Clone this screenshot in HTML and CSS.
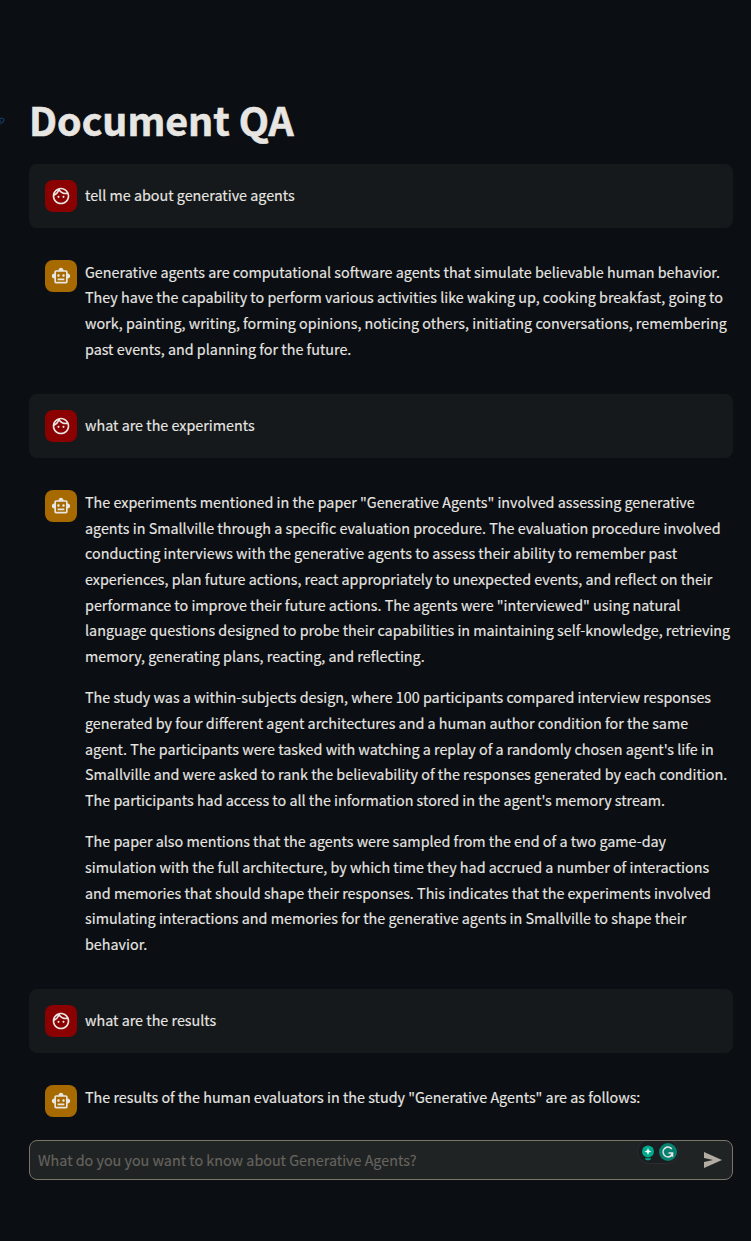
FILE: index.html
```html
<!DOCTYPE html>
<html lang="en">
<head>
<meta charset="utf-8">
<title>Document QA</title>
<link rel="stylesheet" href="styles.css">
</head>
<body>
<svg class="defs" width="0" height="0" aria-hidden="true">
  <symbol id="face" viewBox="0 0 24 24"><path d="M10.25 13a1.25 1.25 0 1 1-2.5 0 1.25 1.25 0 0 1 2.5 0zM15 11.75a1.25 1.25 0 1 0 0 2.5 1.25 1.25 0 0 0 0-2.5zm7 .25c0 5.52-4.48 10-10 10S2 17.52 2 12 6.48 2 12 2s10 4.48 10 10zM10.66 4.12C12.06 6.44 14.6 8 17.5 8c.46 0 .91-.05 1.34-.12C17.44 5.56 14.9 4 12 4c-.46 0-.91.05-1.34.12zM4.42 9.47a8.046 8.046 0 0 0 3.66-4.44 8.046 8.046 0 0 0-3.66 4.44zM20 12c0-.78-.12-1.53-.33-2.24-.7.15-1.42.24-2.17.24a10 10 0 0 1-7.76-3.69A10.016 10.016 0 0 1 4 11.86c.01.04 0 .09 0 .14 0 4.41 3.59 8 8 8s8-3.59 8-8z"/></symbol>
  <symbol id="robot" viewBox="0 0 24 24"><path d="M20 9V7c0-1.1-.9-2-2-2h-3c0-1.66-1.34-3-3-3S9 3.34 9 5H6c-1.1 0-2 .9-2 2v2c-1.66 0-3 1.34-3 3s1.34 3 3 3v4c0 1.1.9 2 2 2h12c1.1 0 2-.9 2-2v-4c1.66 0 3-1.34 3-3s-1.34-3-3-3zm-2 10H6V7h12v12zm-9-6c-.83 0-1.5-.67-1.5-1.5S8.170 10 9 10s1.500.670 1.500 1.500S9.830 13 9 13zm7.500-1.500c0 .83-.67 1.500-1.500 1.500s-1.500-.67-1.500-1.500.67-1.500 1.500-1.500 1.500.670 1.500 1.500zM8 15h8v2H8v-2z"/></symbol>
</svg>
<main class="page">
  <h1 class="title">
    <svg class="anchor" viewBox="0 0 24 24"><path d="M10 13a5 5 0 0 0 7.500.5l3-3a5 5 0 0 0-7-7L11.800 5.200M14 11a5 5 0 0 0-7.500-.5l-3 3a5 5 0 0 0 7 7l1.700-1.700"/></svg>
    <span>Document QA</span>
  </h1>
  <section class="chat">
    <article class="message user">
      <div class="avatar"><svg class="icon"><use href="#face"/></svg></div>
      <div class="content"><p>tell me about generative agents</p></div>
    </article>
    <article class="message">
      <div class="avatar"><svg class="icon"><use href="#robot"/></svg></div>
      <div class="content">
        <p>Generative agents are computational software agents that simulate believable human behavior.<br>
        They have the capability to perform various activities like waking up, cooking breakfast, going to<br>
        work, painting, writing, forming opinions, noticing others, initiating conversations, remembering<br>
        past events, and planning for the future.</p>
      </div>
    </article>
    <article class="message user">
      <div class="avatar"><svg class="icon"><use href="#face"/></svg></div>
      <div class="content"><p>what are the experiments</p></div>
    </article>
    <article class="message">
      <div class="avatar"><svg class="icon"><use href="#robot"/></svg></div>
      <div class="content">
        <p>The experiments mentioned in the paper "Generative Agents" involved assessing generative<br>
        agents in Smallville through a specific evaluation procedure. The evaluation procedure involved<br>
        conducting interviews with the generative agents to assess their ability to remember past<br>
        experiences, plan future actions, react appropriately to unexpected events, and reflect on their<br>
        performance to improve their future actions. The agents were "interviewed" using natural<br>
        language questions designed to probe their capabilities in maintaining self-knowledge, retrieving<br>
        memory, generating plans, reacting, and reflecting.</p>
        <p>The study was a within-subjects design, where 100 participants compared interview responses<br>
        generated by four different agent architectures and a human author condition for the same<br>
        agent. The participants were tasked with watching a replay of a randomly chosen agent's life in<br>
        Smallville and were asked to rank the believability of the responses generated by each condition.<br>
        The participants had access to all the information stored in the agent's memory stream.</p>
        <p>The paper also mentions that the agents were sampled from the end of a two game-day<br>
        simulation with the full architecture, by which time they had accrued a number of interactions<br>
        and memories that should shape their responses. This indicates that the experiments involved<br>
        simulating interactions and memories for the generative agents in Smallville to shape their<br>
        behavior.</p>
      </div>
    </article>
    <article class="message user">
      <div class="avatar"><svg class="icon"><use href="#face"/></svg></div>
      <div class="content"><p>what are the results</p></div>
    </article>
    <article class="message">
      <div class="avatar"><svg class="icon"><use href="#robot"/></svg></div>
      <div class="content"><p>The results of the human evaluators in the study "Generative Agents" are as follows:</p></div>
    </article>
  </section>
  <div class="composer">
    <span class="placeholder">What do you you want to know about Generative Agents?</span>
    <svg class="assist" viewBox="0 0 42 23">
      <rect class="assist-pill" x=".5" y="-1.500" width="41" height="24" rx="12"/>
      <circle class="bulb" cx="11" cy="10.500" r="6"/>
      <path class="bulb" d="M8 17.300h6v1q-3 2.200-6 0z"/>
      <path class="spark" d="M11 7l1 2.500 2.500 1-2.500 1-1 2.500-1-2.500-2.500-1 2.500-1z"/>
      <circle class="disc" cx="31" cy="11" r="9"/>
      <path class="swirl" d="M34.800 7.900a4.900 4.900 0 1 0-1 7.100l1.500-2.500M31.500 12h4v3.800"/>
    </svg>
    <svg class="send" viewBox="0 0 18 16"><path d="M0 0l18 8L0 16v-6l9-2-9-2z"/></svg>
  </div>
</main>
</body>
</html>
```
FILE: styles.css
```css
* { box-sizing: border-box; }

body {
  margin: 0;
  height: 1241px;
  overflow: hidden;
  background: #0b0e12;
  color: #e8e6e3;
  font-family: "Noto Sans CJK JP", "Noto Sans", sans-serif;
  font-size: 14.33px;
  line-height: 25.6px;
  -webkit-text-stroke: 0.15px;
}

.defs { position: absolute; }

.page {
  display: flex;
  flex-direction: column;
  height: 1241px;
  padding: 93px 18px 61px 29px;
}

.title {
  position: relative;
  flex: none;
  height: 52px;
  margin: 0 0 19px;
  font-size: 39.3px;
  font-weight: 700;
  line-height: 52px;
  white-space: nowrap;
  -webkit-text-stroke: 0.6px;
}

.anchor {
  position: absolute;
  left: -34px;
  top: 24px;
  width: 10px;
  height: 10px;
  fill: none;
  stroke: #173f68;
  stroke-width: 2.5;
}

.chat {
  display: flex;
  flex: 1;
  flex-direction: column;
  gap: 16px;
  min-height: 0;
}

.message {
  display: flex;
  flex: none;
  gap: 8px;
  padding: 16px;
  border-radius: 8px;
}

.user {
  align-items: center;
  background: #15191b;
}

.avatar {
  display: flex;
  flex: none;
  align-items: center;
  justify-content: center;
  width: 32px;
  height: 32px;
  border-radius: 8px;
  background: #a66a00;
}

.user .avatar { background: #8b0000; }

.icon {
  width: 20px;
  height: 20px;
  fill: #e8e6e3;
}

.content {
  display: flex;
  flex: 1;
  flex-direction: column;
  gap: 16px;
  min-width: 0;
  margin: -1.2px 0 1.2px;
  white-space: nowrap;
}

.content p { margin: 0; }

.composer {
  display: flex;
  flex: none;
  align-items: center;
  height: 40px;
  padding: 0 10px 0 8px;
  border: 1px solid #7b7469;
  border-radius: 8px;
  background: #202324;
}

.placeholder {
  flex: 1;
  color: #66645f;
  white-space: nowrap;
}

.assist {
  align-self: flex-start;
  width: 42px;
  height: 23px;
  margin-right: 25px;
}

.assist-pill { fill: #1b1e20; stroke: #2b2e30; }
.bulb { fill: #00a98b; }
.spark { fill: #fff; }
.disc { fill: #07816f; }
.swirl { fill: none; stroke: #e8e6e3; stroke-width: 1.6; }

.send {
  width: 18px;
  height: 16px;
  fill: #b2aca2;
}
```
